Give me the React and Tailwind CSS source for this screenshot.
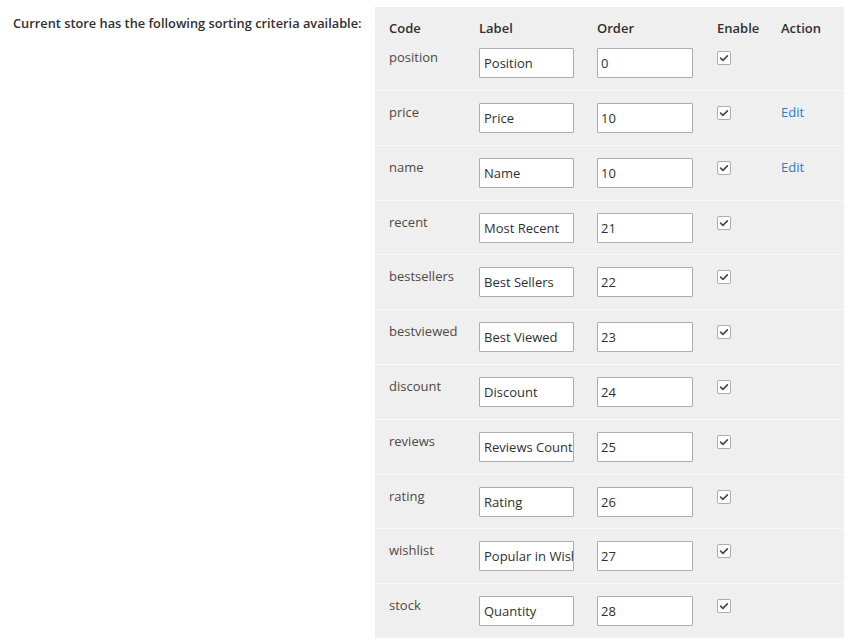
import { useState } from 'react'

const initialRows = [
  { code: 'position', label: 'Position', order: '0', edit: false },
  { code: 'price', label: 'Price', order: '10', edit: true },
  { code: 'name', label: 'Name', order: '10', edit: true },
  { code: 'recent', label: 'Most Recent', order: '21', edit: false },
  { code: 'bestsellers', label: 'Best Sellers', order: '22', edit: false },
  { code: 'bestviewed', label: 'Best Viewed', order: '23', edit: false },
  { code: 'discount', label: 'Discount', order: '24', edit: false },
  { code: 'reviews', label: 'Reviews Count', order: '25', edit: false },
  { code: 'rating', label: 'Rating', order: '26', edit: false },
  { code: 'wishlist', label: 'Popular in Wishlists', order: '27', edit: false },
  { code: 'stock', label: 'Quantity', order: '28', edit: false },
]

function Checkbox({ checked, onChange }) {
  return (
    <button
      type="button"
      onClick={onChange}
      className="w-[14px] h-[14px] bg-white border border-[#adadad] rounded-[2px] flex items-center justify-center"
    >
      {checked && (
        <svg className="w-[10px] h-[10px]" viewBox="0 0 10 10" fill="none">
          <path d="M1.6 5.2l2.3 2.2 4.5-4.6" stroke="#514943" strokeWidth="1.7" strokeLinecap="round" strokeLinejoin="round" />
        </svg>
      )}
    </button>
  )
}

export default function App() {
  const [rows, setRows] = useState(initialRows.map((r) => ({ ...r, enabled: true })))

  const update = (i, key, value) => {
    setRows((prev) => prev.map((r, idx) => (idx === i ? { ...r, [key]: value } : r)))
  }

  return (
    <div className="flex bg-white text-[13px] text-[#41362f] font-['Open_Sans',sans-serif]">
      {/* Field label */}
      <div className="w-[375px] pl-[13px] pt-[14px]">
        <span className="font-semibold text-[12.8px] text-[#303030] leading-[18px]">
          Current store has the following sorting criteria available:
        </span>
      </div>

      {/* Criteria table */}
      <div className="mt-[7px] w-[469px] bg-[#efefef] pl-[14px]">
        <div className="grid grid-cols-[90px_118px_120px_64px_1fr] pt-[12px] leading-[18px] font-semibold text-[#303030]">
          <div>Code</div>
          <div>Label</div>
          <div>Order</div>
          <div>Enable</div>
          <div>Action</div>
        </div>

        {rows.map((row, i) => (
          <div
            key={row.code}
            className={`grid grid-cols-[90px_118px_120px_64px_1fr] -ml-[14px] pl-[14px] ${
              i === 0 ? 'pt-[11px] pb-[12px]' : 'border-t border-[#f8f8f8] pt-[12px] h-[54.8px]'
            }`}
          >
            <div className="leading-[18px] text-[#514943]">{row.code}</div>
            <div>
              <input
                value={row.label}
                onChange={(e) => update(i, 'label', e.target.value)}
                className="w-[95px] h-[30px] bg-white border border-[#adadad] rounded-[1px] pl-[4px] pr-0 text-[13px] text-[#303030] outline-none"
              />
            </div>
            <div>
              <input
                value={row.order}
                onChange={(e) => update(i, 'order', e.target.value)}
                className="w-[96px] h-[30px] bg-white border border-[#adadad] rounded-[1px] pl-[3px] pr-0 text-[13px] text-[#303030] outline-none"
              />
            </div>
            <div className="pt-[3px]">
              <Checkbox checked={row.enabled} onChange={() => update(i, 'enabled', !row.enabled)} />
            </div>
            <div className="leading-[18px]">
              {row.edit && (
                <a href="#" className="text-[#2d7bc7]">
                  Edit
                </a>
              )}
            </div>
          </div>
        ))}
      </div>
    </div>
  )
}
